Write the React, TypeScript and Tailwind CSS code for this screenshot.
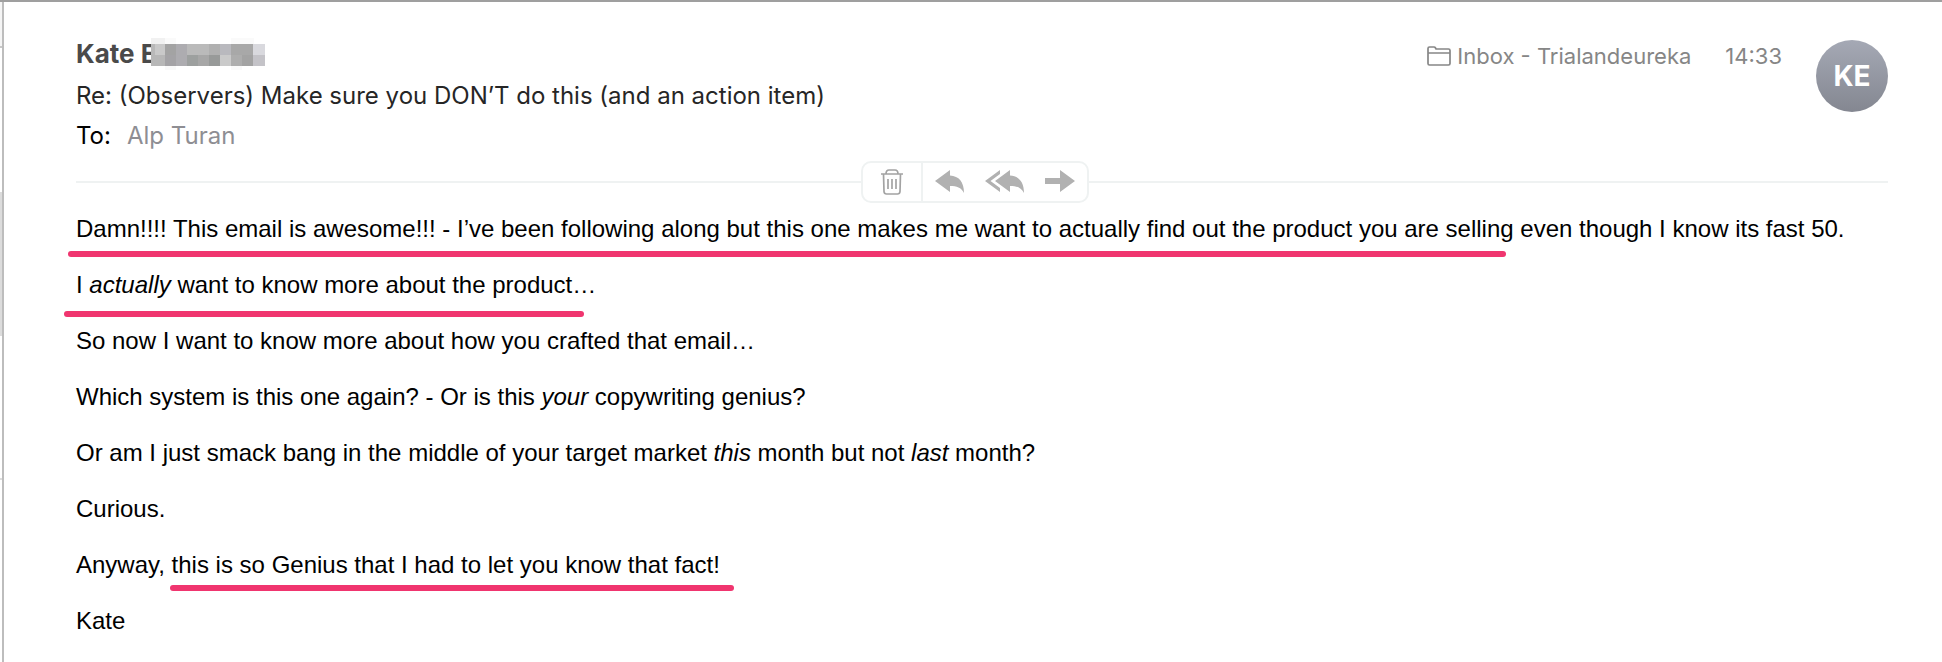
import type { ReactNode } from "react";

// Blurred surname, one row per band: [x, width, shade]
const redactedRows: { y: number; h: number; cells: [number, number, string][] }[] = [
  { y: 0, h: 6, cells: [[0, 14, "#f1f1f1"], [14, 11, "#fafafa"], [80, 23, "#fafafa"]] },
  {
    y: 6,
    h: 11,
    cells: [
      [0, 4, "#b9b9b9"], [4, 10, "#c9c9c9"], [14, 11, "#a3a3a3"], [25, 11, "#adacb0"], [36, 22, "#bababa"],
      [58, 11, "#b0b0b0"], [69, 11, "#b9b9be"], [80, 22, "#a8a8a8"], [102, 12, "#d9d9de"],
    ],
  },
  {
    y: 17,
    h: 11,
    cells: [
      [0, 14, "#b7b7b7"], [14, 11, "#a4a3a6"], [25, 11, "#adacb0"], [36, 11, "#9da09f"], [47, 11, "#a7a7a7"],
      [58, 11, "#989a99"], [69, 11, "#cacaca"], [80, 11, "#adadad"], [91, 11, "#a3a3a3"], [102, 12, "#c4c3c8"],
    ],
  },
  { y: 28, h: 4, cells: [[14, 11, "#f9f9f9"], [80, 11, "#f9f9f9"]] },
];

function Redacted() {
  return (
    <svg width="114" height="32" viewBox="0 0 114 32" className="relative" shapeRendering="crispEdges" aria-hidden="true">
      {redactedRows.map((row) =>
        row.cells.map(([x, w, fill]) => (
          <rect key={`${row.y}-${x}`} x={x} y={row.y} width={w} height={row.h} fill={fill} />
        ))
      )}
    </svg>
  );
}

function FolderIcon() {
  return (
    <svg width="24" height="20" viewBox="0 0 24 20" fill="none" stroke="#868686" strokeWidth="1.7" aria-hidden="true">
      <path d="M1 17.5V2.5Q1 1 2.5 1H7Q8 1 8.5 2L9 3H21.5Q23 3 23 4.5V17.5Q23 19 21.5 19H2.5Q1 19 1 17.5ZM1 7H23" />
    </svg>
  );
}

function TrashIcon() {
  return (
    <svg width="22" height="26" viewBox="0 0 22 26" fill="none" stroke="#a3a3a3" strokeWidth="1.7" aria-hidden="true">
      <path d="M0 5H22M5 5Q5 1 8 1H14Q17 1 17 5M2.5 5L3 22.5Q3.2 25 5.5 25H16.5Q18.8 25 19 22.5L19.5 5" />
      <path d="M7 10V20M11 10V20M15 10V20" />
    </svg>
  );
}

function ReplyIcon() {
  return (
    <svg width="30" height="24" viewBox="0 0 30 24" fill="#b1b1b1" aria-hidden="true">
      <path d="M0 11L15 0V5.5C24 6 29 12 29 23C26 17.5 22 16 15 16V22Z" />
    </svg>
  );
}

function ReplyAllIcon() {
  return (
    <svg width="40" height="24" viewBox="0 0 40 24" fill="#b1b1b1" aria-hidden="true">
      <path d="M0 11L15 0V4L5.5 11L15 18V22Z" />
      <path d="M10 11L25 0V5.5C34 6 39 12 39 23C36 17.5 32 16 25 16V22Z" />
    </svg>
  );
}

function ForwardIcon() {
  return (
    <svg width="30" height="24" viewBox="0 0 30 24" fill="#b1b1b1" aria-hidden="true">
      <path d="M0 8H15V0L30 11L15 22V14H0Z" />
    </svg>
  );
}

function Marked({ children, line }: { children: ReactNode; line: string }) {
  return (
    <span className="relative inline-block">
      {children}
      <span className={`absolute h-1.5 rounded-full bg-[#f0356f] ${line}`} />
    </span>
  );
}

export default function App() {
  return (
    <div className="flex min-h-screen border-t-2 border-[#9f9f9f] bg-white font-['Inter','Roboto',sans-serif]">
      {/* Edge of the message list */}
      <aside className="flex w-0.5 shrink-0 flex-col">
        <div className="h-11 bg-[#f5f5f5]" />
        <div className="h-0.5 bg-[#c8c8c8]" />
        <div className="h-36" />
        <div className="h-36 bg-[#dcdcdc]" />
        <div className="mt-[142px] h-0.5 bg-[#dddddd]" />
      </aside>

      <main className="min-w-0 flex-1 border-l-2 border-[#bdbdbd]">
        <header className="flex items-start justify-between pt-8 pr-[54px] pl-[72px]">
          <div className="text-2xl text-[#262626]">
            <h1 className="flex h-10 items-center text-[26px] font-bold text-[#4a4a4a]">
              <span className="w-[75px] whitespace-nowrap">Kate E</span>
              <Redacted />
            </h1>
            <h2 className="mt-0.5 leading-10">Re: (Observers) Make sure you DON’T do this (and an action item)</h2>
            <p className="flex gap-4 leading-10">
              <span className="text-black">To:</span>
              <a href="#contact" className="text-[#8e8e93]">Alp Turan</a>
            </p>
          </div>

          <div className="flex items-start gap-[34px] text-[22px] text-[#868686]">
            <span className="flex items-center gap-1.5 leading-11">
              <FolderIcon />
              Inbox - Trialandeureka
            </span>
            <time className="leading-11">14:33</time>
            <div className="mt-1.5 flex size-[72px] items-center justify-center rounded-full bg-linear-to-b from-[#a5a9b5] to-[#848791] text-[28px] font-bold text-white">
              KE
            </div>
          </div>
        </header>

        <div className="mt-[5px] grid grid-cols-[1fr_auto_1fr] items-center pl-1">
          <div className="ml-[68px] h-0.5 bg-[#eff2f2]" />
          <div className="flex h-[42px] w-[228px] overflow-hidden rounded-[10px] border-2 border-[#eff2f2]">
            <button type="button" aria-label="Delete" className="flex w-[60px] items-center justify-center border-r-2 border-[#eff2f2]">
              <TrashIcon />
            </button>
            <button type="button" aria-label="Reply" className="flex flex-1 items-center justify-center">
              <ReplyIcon />
            </button>
            <button type="button" aria-label="Reply all" className="flex flex-1 items-center justify-center">
              <ReplyAllIcon />
            </button>
            <button type="button" aria-label="Forward" className="flex flex-1 items-center justify-center">
              <ForwardIcon />
            </button>
          </div>
          <div className="mr-[54px] h-0.5 bg-[#eff2f2]" />
        </div>

        <article className="flex flex-col gap-7 pt-3 pr-[54px] pl-[72px] font-['Liberation_Sans',Arial,sans-serif] text-2xl leading-7 text-black">
          <p>
            <Marked line="-left-2 right-2 top-9">
              Damn!!!! This email is awesome!!! - I’ve been following along but this one makes me want to actually find out the product you are selling
            </Marked>{" "}
            even though I know its fast 50.
          </p>
          <p>
            <Marked line="-left-3 right-3 top-10">
              I <em>actually</em> want to know more about the product…
            </Marked>
          </p>
          <p>So now I want to know more about how you crafted that email…</p>
          <p>
            Which system is this one again? - Or is this <em>your</em> copywriting genius?
          </p>
          <p>
            Or am I just smack bang in the middle of your target market <em>this</em> month but not <em>last</em> month?
          </p>
          <p>Curious.</p>
          <p>
            Anyway, <Marked line="-left-0.5 -right-3.5 top-8.5">this is so Genius that I had to let you know that fact!</Marked>
          </p>
          <p>Kate</p>
        </article>
      </main>
    </div>
  );
}
